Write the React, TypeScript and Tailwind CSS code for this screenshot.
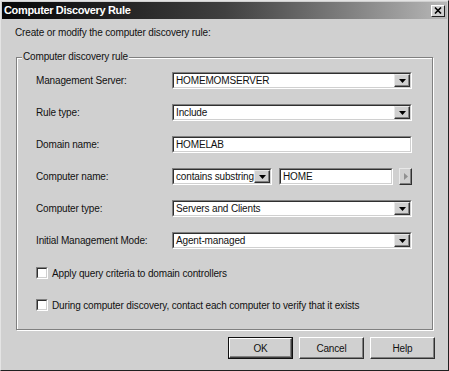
import React from "react";

function Arrow() {
  return (
    <div className="w-[16px] h-full bg-[#d0d0d0] border border-t-[#e8e8e8] border-l-[#e8e8e8] border-b-[#303030] border-r-[#303030] shadow-[inset_-1px_-1px_0_#808080] flex items-center justify-center">
      <svg width="7" height="4" viewBox="0 0 7 4">
        <polygon points="0,0 7,0 3.5,4" fill="#000" />
      </svg>
    </div>
  );
}

function Field({ text, combo, className = "" }: { text: string; combo?: boolean; className?: string }) {
  return (
    <div className={"h-[17px] border border-t-[#808080] border-l-[#808080] border-b-white border-r-white " + className}>
      <div className="h-full border border-t-[#303030] border-l-[#303030] border-b-[#d0d0d0] border-r-[#d0d0d0] bg-white flex items-center">
        <span className="flex-1 pl-[2px] whitespace-nowrap overflow-hidden leading-[13px]">{text}</span>
        {combo && <Arrow />}
      </div>
    </div>
  );
}

function Row({ label, children }: { label: string; children: React.ReactNode }) {
  return (
    <div className="flex items-center h-[17px]">
      <div className="w-[136px] whitespace-nowrap">{label}</div>
      <div className="w-[240px] flex">{children}</div>
    </div>
  );
}

function Check({ label, className = "" }: { label: string; className?: string }) {
  return (
    <div className={"flex items-center h-[14px] " + className}>
      <div className="w-[12px] h-[12px] border border-t-[#808080] border-l-[#808080] border-b-white border-r-white">
        <div className="w-full h-full border border-t-[#303030] border-l-[#303030] border-b-[#d0d0d0] border-r-[#d0d0d0] bg-white" />
      </div>
      <span className="ml-[4px] whitespace-nowrap">{label}</span>
    </div>
  );
}

function Btn({ label, def }: { label: string; def?: boolean }) {
  if (def) {
    return (
      <div className="w-[65px] h-[22px] border border-[#101010]">
        <div className="w-full h-full border border-t-white border-l-white border-b-[#404040] border-r-[#404040] shadow-[inset_-1px_-1px_0_#808080] flex items-center justify-center">
          {label}
        </div>
      </div>
    );
  }
  return (
    <div className="w-[65px] h-[22px] border border-t-white border-l-white border-b-[#303030] border-r-[#303030] shadow-[inset_-1px_-1px_0_#808080] flex items-center justify-center">
      {label}
    </div>
  );
}

export default function App() {
  return (
    <div className="w-[449px] h-[371px] bg-[#d0d0d0] border border-t-[#e4e4e4] border-l-[#e4e4e4] border-b-[#202020] border-r-[#202020] p-[1px] flex flex-col font-['Liberation_Sans',Arial,sans-serif] text-[10px] tracking-[-0.15px] text-[#111]">
      <div className="h-[17px] flex items-center bg-gradient-to-r from-[#080808] via-[#404040] to-[#b8b8b8]">
        <span className="flex-1 pl-[2px] text-white font-bold text-[11px] tracking-[-0.35px] leading-[17px]">Computer Discovery Rule</span>
        <div className="w-[14px] h-[12px] mr-[2px] bg-[#d0d0d0] border border-t-white border-l-white border-b-[#202020] border-r-[#202020] flex items-center justify-center">
          <svg width="8" height="7" viewBox="0 0 8 7">
            <path d="M1 0.5 L7 6.5 M7 0.5 L1 6.5" stroke="#000" strokeWidth="1.6" />
          </svg>
        </div>
      </div>
      <div className="ml-[13px] mt-[7px] h-[14px] leading-[14px]">Create or modify the computer discovery rule:</div>
      <div className="relative ml-[14px] mt-[17px] w-[417px] h-[273px] border border-[#808080] shadow-[inset_1px_1px_0_#fff,1px_1px_0_#fff] pt-[14px] pl-[19px]">
        <span className="absolute left-[5px] top-[-8px] px-[1px] bg-[#d0d0d0] leading-[14px]">Computer discovery rule</span>
        <div className="flex flex-col gap-[15px]">
          <Row label="Management Server:">
            <Field text="HOMEMOMSERVER" combo className="w-full" />
          </Row>
          <Row label="Rule type:">
            <Field text="Include" combo className="w-full" />
          </Row>
          <Row label="Domain name:">
            <Field text="HOMELAB" className="w-full" />
          </Row>
          <Row label="Computer name:">
            <Field text="contains substring" combo className="w-[100px]" />
            <Field text="HOME" className="flex-1 ml-[7px]" />
            <div className="w-[13px] h-[17px] ml-[6px] bg-[#d0d0d0] border border-t-[#e8e8e8] border-l-[#e8e8e8] border-b-[#303030] border-r-[#303030] shadow-[inset_-1px_-1px_0_#808080] flex items-center justify-center">
              <svg width="4" height="7" viewBox="0 0 4 7">
                <polygon points="0,0 4,3.5 0,7" fill="#909090" />
              </svg>
            </div>
          </Row>
          <Row label="Computer type:">
            <Field text="Servers and Clients" combo className="w-full" />
          </Row>
          <Row label="Initial Management Mode:">
            <Field text="Agent-managed" combo className="w-full" />
          </Row>
        </div>
        <Check label="Apply query criteria to domain controllers" className="mt-[17px]" />
        <Check label="During computer discovery, contact each computer to verify that it exists" className="mt-[18px]" />
      </div>
      <div className="flex justify-end gap-[6px] mt-[7px] mr-[12px]">
        <Btn label="OK" def />
        <Btn label="Cancel" />
        <Btn label="Help" />
      </div>
    </div>
  );
}
